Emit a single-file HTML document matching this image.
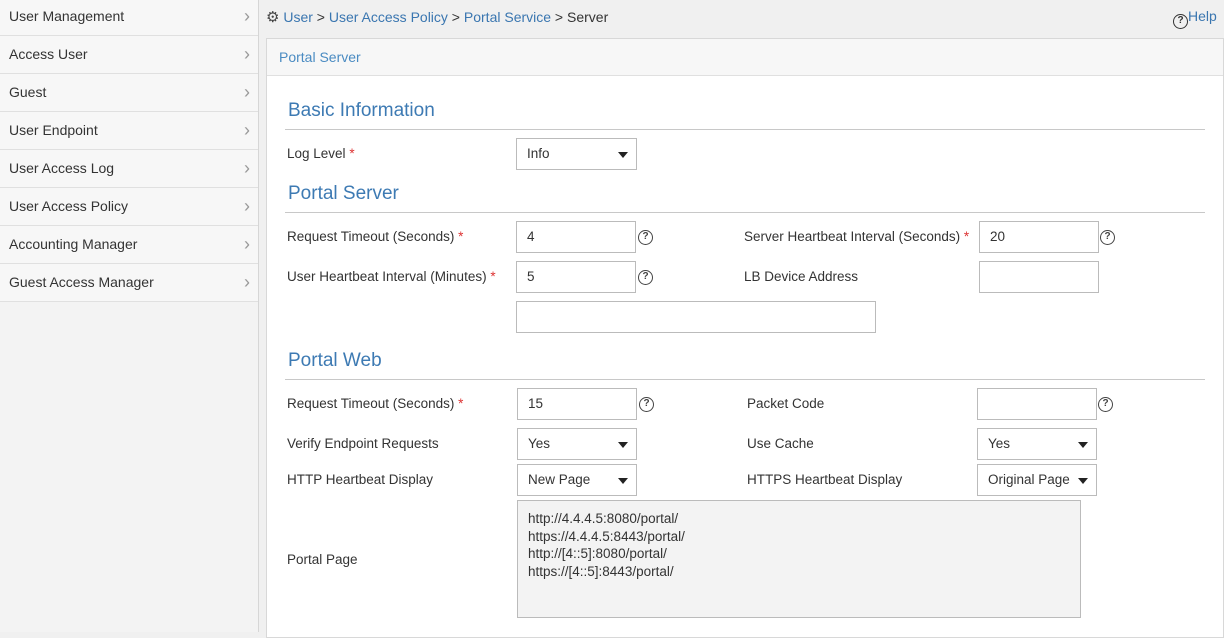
<!DOCTYPE html>
<html><head><meta charset="utf-8"><style>
*{box-sizing:border-box;margin:0;padding:0}
body{width:1224px;height:632px;overflow:hidden;font-family:"Liberation Sans",sans-serif;font-size:13.5px;color:#333;background:#f0f0f0;position:relative}
.a{position:absolute}
#side{left:0;top:0;width:259px;height:632px;background:#f3f3f3;border-right:1px solid #d6d6d6}
.it{position:absolute;left:0;width:258px;height:38px;border-bottom:1px solid #e0e0e0;background:#f7f7f7;padding:10px 0 0 9px;font-size:14px}
.it:after{content:"›";position:absolute;right:8px;top:8px;color:#999;font-size:18px}
.bc{color:#3a76b0}
#panel{left:266px;top:38px;width:958px;height:600px;background:#fff;border:1px solid #d8d8d8}
#ph{left:0;top:0;width:956px;height:37px;background:#f7f7f7;border-bottom:1px solid #e0e0e0;color:#4a8bc2;font-size:14px;padding:10px 12px}
.h{color:#3d7ab3;font-size:19px}
.hr{height:1px;background:#c8c8c8;left:285px;width:920px}
.l{font-size:13.5px}
.s{color:#d33}
.in{border:1px solid #bbb;background:#fff;height:32px;padding:7px 10px;font-size:13.5px}
.sel:after{content:"";position:absolute;right:8px;top:13px;border-left:5px solid transparent;border-right:5px solid transparent;border-top:6px solid #222}
.q{width:15px;height:15px;border:1.3px solid #444;border-radius:50%;font-size:10px;text-align:center;line-height:12px;font-weight:bold;color:#444}
</style></head><body>
<div id="side" class="a">
<div class="it" style="top:-2px">User Management</div>
<div class="it" style="top:36px">Access User</div>
<div class="it" style="top:74px">Guest</div>
<div class="it" style="top:112px">User Endpoint</div>
<div class="it" style="top:150px">User Access Log</div>
<div class="it" style="top:188px">User Access Policy</div>
<div class="it" style="top:226px">Accounting Manager</div>
<div class="it" style="top:264px">Guest Access Manager</div>
</div>
<div class="a" style="left:266px;top:8px;font-size:14px"><span style="font-size:15px;color:#444">⚙</span> <span class="bc">User</span> &gt; <span class="bc">User Access Policy</span> &gt; <span class="bc">Portal Service</span> &gt; Server</div>
<div class="a bc" style="left:1173px;top:8px;font-size:14px"><span class="q" style="display:inline-block;border-color:#333;color:#333;vertical-align:-2px">?</span>Help</div>
<div id="panel" class="a"><div id="ph" class="a">Portal Server</div></div>

<div class="a h" style="left:288px;top:100px">Basic Information</div>
<div class="a hr" style="top:129px"></div>
<div class="a l" style="left:287px;top:146px">Log Level <span class="s">*</span></div>
<div class="a in sel" style="left:516px;top:138px;width:121px">Info</div>

<div class="a h" style="left:288px;top:183px">Portal Server</div>
<div class="a hr" style="top:212px"></div>
<div class="a l" style="left:287px;top:229px">Request Timeout (Seconds) <span class="s">*</span></div>
<div class="a in" style="left:516px;top:221px;width:120px">4</div>
<div class="a q" style="left:638px;top:230px">?</div>
<div class="a l" style="left:744px;top:229px">Server Heartbeat Interval (Seconds) <span class="s">*</span></div>
<div class="a in" style="left:979px;top:221px;width:120px">20</div>
<div class="a q" style="left:1100px;top:230px">?</div>
<div class="a l" style="left:287px;top:269px">User Heartbeat Interval (Minutes) <span class="s">*</span></div>
<div class="a in" style="left:516px;top:261px;width:120px">5</div>
<div class="a q" style="left:638px;top:270px">?</div>
<div class="a l" style="left:744px;top:269px">LB Device Address</div>
<div class="a in" style="left:979px;top:261px;width:120px"></div>
<div class="a in" style="left:516px;top:301px;width:360px"></div>

<div class="a h" style="left:288px;top:350px">Portal Web</div>
<div class="a hr" style="top:379px"></div>
<div class="a l" style="left:287px;top:396px">Request Timeout (Seconds) <span class="s">*</span></div>
<div class="a in" style="left:517px;top:388px;width:120px">15</div>
<div class="a q" style="left:639px;top:397px">?</div>
<div class="a l" style="left:747px;top:396px">Packet Code</div>
<div class="a in" style="left:977px;top:388px;width:120px"></div>
<div class="a q" style="left:1098px;top:397px">?</div>
<div class="a l" style="left:287px;top:436px">Verify Endpoint Requests</div>
<div class="a in sel" style="left:517px;top:428px;width:120px">Yes</div>
<div class="a l" style="left:747px;top:436px">Use Cache</div>
<div class="a in sel" style="left:977px;top:428px;width:120px">Yes</div>
<div class="a l" style="left:287px;top:472px">HTTP Heartbeat Display</div>
<div class="a in sel" style="left:517px;top:464px;width:120px">New Page</div>
<div class="a l" style="left:747px;top:472px">HTTPS Heartbeat Display</div>
<div class="a in sel" style="left:977px;top:464px;width:120px">Original Page</div>
<div class="a l" style="left:287px;top:552px">Portal Page</div>
<div class="a in" style="left:517px;top:500px;width:564px;height:118px;background:#f3f3f3;line-height:17.5px;padding:9px 10px">http://4.4.4.5:8080/portal/<br>https://4.4.4.5:8443/portal/<br>http://[4::5]:8080/portal/<br>https://[4::5]:8443/portal/</div>
</body></html>
